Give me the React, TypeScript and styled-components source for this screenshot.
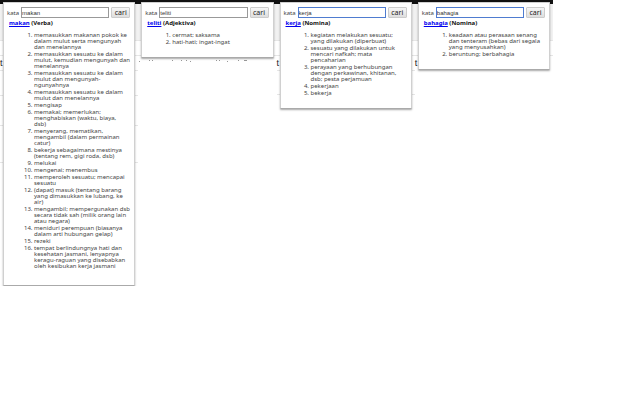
import React from 'react';
import styled, { createGlobalStyle } from 'styled-components';

const GlobalStyle = createGlobalStyle`
  *, *::before, *::after { box-sizing: border-box; }
  body {
    margin: 0;
    background: #fff;
    color: #444;
    font: 6px/6px "Noto Sans", "DejaVu Sans", sans-serif;
  }
`;

const Strip = styled.main`
  display: grid;
  grid-template-columns: repeat(4, minmax(0, 1fr));
  margin-right: 87px;
`;

const ruleLayer = (y: number) => `linear-gradient(#e6e6e6, #e6e6e6) 0 ${y}px / 100% 1px no-repeat,`;

const Backdrop = styled.section<{ $rules: number[] }>`
  position: relative;
  display: flex;
  align-items: flex-start;
  padding: 2px 3px 0;
  background:
    ${(p) => p.$rules.map(ruleLayer).join('\n')}
    linear-gradient(#111 0 4px, #f1f1f1 4px 40px, #fff 40px);
`;

const PageLetter = styled.span`
  position: absolute;
  top: 59px;
  left: 0;
  color: #222;
  font: 9px/9px "Liberation Sans", Arial, sans-serif;
`;

const PageText = styled.svg`
  position: absolute;
  top: 60px;
  left: 0;
  width: 100%;
  height: 2px;
`;

const Popup = styled.article<{ $long: boolean }>`
  position: relative;
  flex: 1;
  min-width: 0;
  padding: 4px 4px ${(p) => (p.$long ? 15 : 11)}px 3px;
  background: #fff;
  border: 1px solid #d0d0d0;
  border-bottom-color: #aaa;
  border-radius: 1px;
  box-shadow: 0 1px 2px rgba(0, 0, 0, 0.35);
`;

const SearchForm = styled.form`
  display: flex;
  align-items: center;
  gap: 2px;
`;

const Label = styled.label`
  color: #444;
`;

const TextBox = styled.input<{ $focused?: boolean }>`
  flex: 1;
  min-width: 0;
  height: 11px;
  padding: 0;
  border: 1px solid ${(p) => (p.$focused ? '#4f7cd0' : '#999')};
  border-radius: 0;
  background: #fff;
  color: #333;
  font: 6px "Liberation Sans", Arial, sans-serif;
`;

const SubmitButton = styled.button`
  width: 19px;
  height: 11px;
  padding: 0;
  border: 1px solid #ccc;
  border-radius: 1px;
  background: linear-gradient(#f6f6f6, #dedede);
  color: #222;
  font: 7px/9px "Noto Sans", sans-serif;
`;

const Heading = styled.h2`
  margin: 2px 2px 0;
  color: #111;
  font-size: 6px;
  line-height: 7px;
`;

const WordLink = styled.a`
  color: #00e;
`;

const Meanings = styled.ol`
  margin: 5px 0 0;
  padding: 0 0 0 27px;
`;

const Meaning = styled.li`
  margin-bottom: 1px;
  white-space: pre-line;
`;

type Entry = {
  word: string;
  kind: string;
  focused?: boolean;
  letter?: boolean;
  fragments?: boolean;
  rules: number[];
  meanings: string[];
};

const entries: Entry[] = [
  {
    word: 'makan',
    kind: 'Verba',
    letter: true,
    rules: [40, 55, 70, 95, 125, 162],
    meanings: [
      'memasukkan makanan pokok ke dalam mulut serta mengunyah dan menelannya',
      'memasukkan sesuatu ke dalam mulut, kemudian mengunyah dan menelannya',
      'memasukkan sesuatu ke dalam mulut dan mengunyah-ngunyahnya',
      'memasukkan sesuatu ke dalam mulut dan menelannya',
      'mengisap',
      'memakai; memerlukan; menghabiskan (waktu, biaya,\ndsb)',
      'menyerang, mematikan, mengambil (dalam permainan catur)',
      'bekerja sebagaimana mestinya (tentang rem, gigi roda, dsb)',
      'melukai',
      'mengenai; menembus',
      'memperoleh sesuatu; mencapai sesuatu',
      '(dapat) masuk (tentang barang yang dimasukkan ke lubang, ke air)',
      'mengambil; mempergunakan dsb secara tidak sah (milik orang lain atau negara)',
      'meniduri perempuan (biasanya dalam arti hubungan gelap)',
      'rezeki',
      'tempat berlindungnya hati dan kesehatan jasmani, lenyapnya keragu-raguan yang disebabkan oleh kesibukan kerja jasmani',
    ],
  },
  {
    word: 'teliti',
    kind: 'Adjektiva',
    fragments: true,
    rules: [40, 55],
    meanings: ['cermat; saksama', 'hati-hati; ingat-ingat'],
  },
  {
    word: 'kerja',
    kind: 'Nomina',
    focused: true,
    letter: true,
    rules: [40, 55, 70, 94],
    meanings: [
      'kegiatan melakukan sesuatu; yang dilakukan (diperbuat)',
      'sesuatu yang dilakukan untuk mencari nafkah; mata pencaharian',
      'perayaan yang berhubungan dengan perkawinan, khitanan, dsb; pesta perjamuan',
      'pekerjaan',
      'bekerja',
    ],
  },
  {
    word: 'bahagia',
    kind: 'Nomina',
    focused: true,
    letter: true,
    rules: [40, 55],
    meanings: [
      'keadaan atau perasaan senang dan tenteram (bebas dari segala yang menyusahkan)',
      'beruntung; berbahagia',
    ],
  },
];

export default function App() {
  return (
    <>
      <GlobalStyle />
      <Strip>
        {entries.map((entry) => (
          <Backdrop key={entry.word} $rules={entry.rules}>
            {entry.letter && <PageLetter>t</PageLetter>}
            {entry.fragments && (
              <PageText aria-hidden="true">
                <path
                  d="M1 1.5h1M11 .5h1M14 .5h1M34 .5h1M43 .5h1M48 .5h1M52 1.5h1M78 .5h1M81 .5h1M89 1.5h1M100 .5h1M106 .5h3"
                  stroke="#999"
                />
              </PageText>
            )}
            <Popup $long={entry.meanings.length > 10}>
              <SearchForm onSubmit={(event) => event.preventDefault()}>
                <Label htmlFor={`kata-${entry.word}`}>kata</Label>
                <TextBox id={`kata-${entry.word}`} defaultValue={entry.word} $focused={entry.focused} />
                <SubmitButton type="submit">cari</SubmitButton>
              </SearchForm>
              <Heading>
                <WordLink href={`#${entry.word}`}>{entry.word}</WordLink> ({entry.kind})
              </Heading>
              <Meanings>
                {entry.meanings.map((meaning) => (
                  <Meaning key={meaning}>{meaning}</Meaning>
                ))}
              </Meanings>
            </Popup>
          </Backdrop>
        ))}
      </Strip>
    </>
  );
}
